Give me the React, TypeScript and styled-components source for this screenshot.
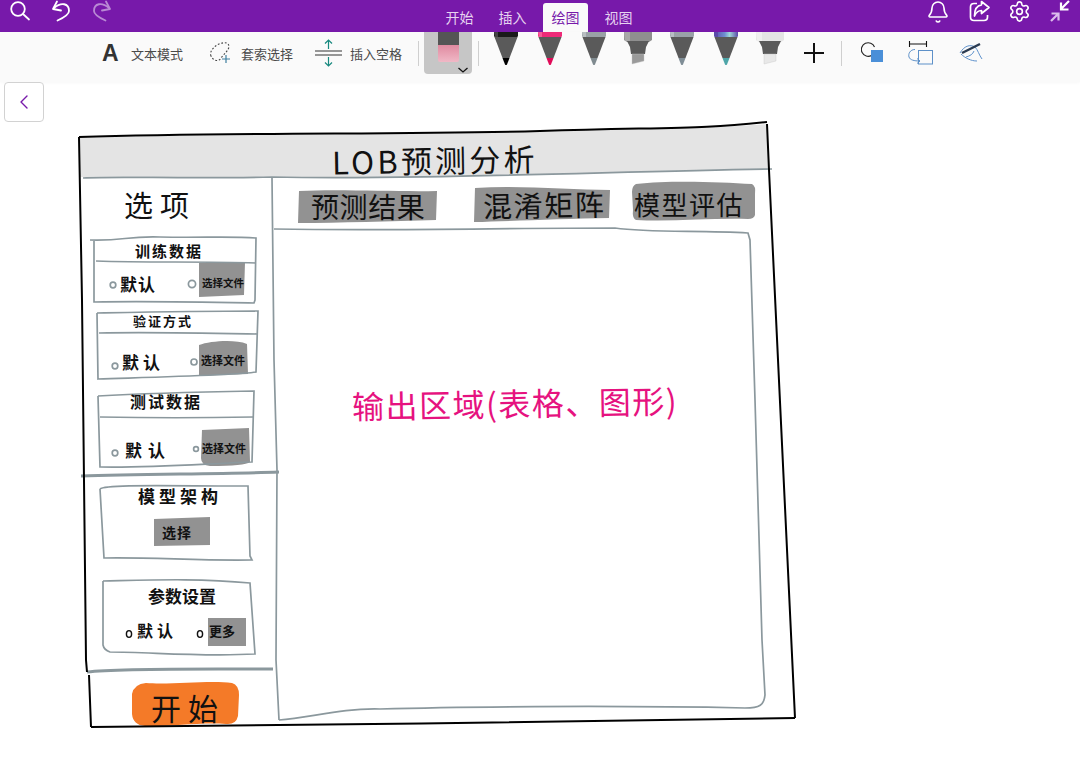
import React from "react";
import styled, { createGlobalStyle } from "styled-components";
import { Bell, ChevronLeft, Settings } from "lucide-react";

const cjk = `"Noto Sans CJK SC", "Noto Sans", sans-serif`;
const CANVAS_TOP = 82;

const GlobalStyle = createGlobalStyle`
  html, body {
    margin: 0;
    padding: 0;
    background: #ffffff;
    overflow: hidden;
  }
  body {
    font-family: ${cjk};
  }
`;

const Page = styled.div`
  width: 1080px;
  height: 774px;
  display: flex;
  flex-direction: column;
`;

const TopBar = styled.header`
  height: 32px;
  flex: none;
  background: #7719aa;
  display: grid;
  grid-template-columns: 1fr auto 1fr;
  padding: 0 8px;
  color: #ffffff;
`;

const IconGroup = styled.div<{ $end?: boolean }>`
  display: flex;
  gap: 17px;
  justify-content: ${(p) => (p.$end ? "flex-end" : "flex-start")};
  svg {
    display: block;
  }
`;

const Tabs = styled.nav`
  display: flex;
  gap: 8px;
  align-items: flex-end;
  margin-left: -2px;
`;

const Tab = styled.div<{ $active?: boolean }>`
  width: 45px;
  height: 29px;
  border-radius: 3px 3px 0 0;
  display: flex;
  align-items: center;
  justify-content: center;
  font-size: 14px;
  padding-bottom: 1px;
  box-sizing: border-box;
  background: ${(p) => (p.$active ? "#fafafa" : "transparent")};
  color: ${(p) => (p.$active ? "#7719aa" : "#e6d2f0")};
`;

const Toolbar = styled.div`
  height: 50px;
  flex: none;
  box-sizing: border-box;
  background: #fafafa;
  box-shadow: 0 1px 3px rgba(0, 0, 0, 0.03);
  display: flex;
  align-items: center;
  padding: 0 0 8px 102px;
`;

const Tool = styled.div<{ $gap: number; $after: number }>`
  display: flex;
  align-items: center;
  gap: ${(p) => p.$gap}px;
  margin-right: ${(p) => p.$after}px;
  font-size: 13px;
  color: #4a4a4a;
  svg {
    display: block;
  }
`;

const BigA = styled.span`
  font-family: "Liberation Sans", sans-serif;
  font-weight: 700;
  font-size: 23px;
  color: #333333;
  width: 17px;
`;

const Separator = styled.div<{ $after: number }>`
  width: 1px;
  height: 25px;
  flex: none;
  background: #cfcfcf;
  margin-right: ${(p) => p.$after}px;
`;

const EraserTile = styled.div`
  align-self: flex-start;
  width: 48px;
  height: 42px;
  flex: none;
  background: #c6c6c6;
  border-radius: 0 0 4px 4px;
  margin-right: 6px;
  svg {
    display: block;
  }
`;

const PenRow = styled.div`
  align-self: flex-start;
  display: flex;
  margin-left: 5px;
  margin-right: 12px;
  svg {
    display: block;
  }
`;

const Canvas = styled.main`
  position: relative;
  flex: 1;
  overflow: hidden;
`;

const SketchLayer = styled.svg`
  position: absolute;
  inset: 0;
  width: 100%;
  height: 100%;
`;

const BackButton = styled.button`
  position: absolute;
  left: 4px;
  top: 0;
  width: 40px;
  height: 40px;
  padding: 0;
  display: flex;
  align-items: center;
  justify-content: center;
  background: #ffffff;
  border: 1px solid #d2d2d2;
  border-radius: 4px;
  color: #7719aa;
`;

const Note = styled.div<{
  $x: number;
  $y: number;
  $size: number;
  $space?: number;
  $tilt?: number;
  $bold?: boolean;
  $color?: string;
}>`
  position: absolute;
  left: ${(p) => p.$x}px;
  top: ${(p) => p.$y - CANVAS_TOP}px;
  transform: translateY(-50%) rotate(${(p) => p.$tilt ?? 0}deg);
  transform-origin: left center;
  white-space: nowrap;
  line-height: 1;
  font-size: ${(p) => p.$size}px;
  letter-spacing: ${(p) => p.$space ?? 0}px;
  font-weight: ${(p) => (p.$bold ? 700 : 400)};
  color: ${(p) => p.$color ?? "#111111"};
`;

type PenTip = { barrel: string; barrelEdge: string; nib: string };

const RoundPen = ({ barrel, barrelEdge, nib }: PenTip) => (
  <svg width="44" height="36" viewBox="0 0 44 36">
    <defs>
      <linearGradient id="iris" x1="0" x2="1" y1="0" y2="0">
        <stop offset="0" stopColor="#5a4aa8" />
        <stop offset="0.45" stopColor="#6f8fd0" />
        <stop offset="0.65" stopColor="#9fd8d8" />
        <stop offset="1" stopColor="#5a4aa8" />
      </linearGradient>
    </defs>
    <path d="M10 0H34V4L32 7H12L10 4Z" fill={barrel} />
    <path d="M10 0H14V5H11Z" fill={barrelEdge} />
    <path d="M10.5 5H33.5L25.5 26H18.5Z" fill="#5a5a5a" />
    <path d="M18.5 26H25.5L23 32.5Q22 33.5 21 32.5Z" fill={nib} />
  </svg>
);

const ChiselPen = ({ barrel, barrelEdge, nib }: PenTip) => (
  <svg width="44" height="36" viewBox="0 0 44 36">
    <path d="M8 0H36V8L33 10H11L8 8Z" fill={barrel} />
    <path d="M8 0H14V9H9Z" fill={barrelEdge} />
    <path d="M11 9H33L30 15L29 22H15L14 15Z" fill="#5a5a5a" />
    <path d="M16 22H28V29L16 32Z" fill={nib} stroke="#c4c4c4" strokeWidth="0.4" />
  </svg>
);

const Eraser = () => (
  <svg width="48" height="42" viewBox="0 0 48 42">
    <defs>
      <linearGradient id="rubber" x1="0" x2="0" y1="0" y2="1">
        <stop offset="0" stopColor="#e08aa0" />
        <stop offset="1" stopColor="#f0b8c6" />
      </linearGradient>
    </defs>
    <rect x="14" y="0" width="21" height="13" fill="#555555" />
    <path d="M14 13H35V28Q35 30 33 30H16Q14 30 14 28Z" fill="url(#rubber)" />
    <path d="M34.5 36L39 40L43.5 36" fill="none" stroke="#111" strokeWidth="1.3" />
  </svg>
);

const SearchIcon = () => (
  <svg width="24" height="24" viewBox="0 0 24 24" fill="none" stroke="#fff" strokeWidth="1.8">
    <circle cx="10" cy="9" r="6.8" />
    <path d="M15 14L21 19.5" strokeLinecap="round" />
  </svg>
);

const UndoIcon = ({ flip }: { flip?: boolean }) => (
  <svg
    width="24"
    height="24"
    viewBox="0 0 24 24"
    fill="none"
    stroke={flip ? "#b98ad4" : "#fff"}
    strokeWidth="1.8"
    strokeLinecap="round"
    strokeLinejoin="round"
  >
    <g transform={flip ? "matrix(-1 0 0 1 24 0)" : undefined}>
      <path d="M8 1.5L4 9L12 10.5" />
      <path d="M5 8C12 2 20 3 20 11C20 15 14 18 8.5 20.5" />
    </g>
  </svg>
);

const ShareIcon = () => (
  <svg width="24" height="24" viewBox="0 0 24 24" fill="none" stroke="#fff" strokeWidth="1.7" strokeLinejoin="round">
    <path d="M10 3.5H7Q3.5 3.5 3.5 7V17Q3.5 20.5 7 20.5H17Q20.5 20.5 20.5 17V15" />
    <path d="M14.5 1.5L22 7.5L14.5 13.5V10.5C11 10.5 9 12.5 7.5 16C7.5 10 10 5.5 14.5 4.8Z" />
  </svg>
);

const CollapseIcon = () => (
  <svg width="24" height="24" viewBox="0 0 24 24" fill="none" strokeWidth="2.2">
    <path d="M21 1L13.5 8.5M13 2.5V9.5H20.5" stroke="#fff" />
    <path d="M3 21L10 14M3.5 13.5H10.5V20.5" stroke="#dcbcec" />
  </svg>
);

const LassoIcon = () => (
  <svg width="24" height="24" viewBox="0 0 24 24" fill="none">
    <path
      d="M2 15C0 11 5 5 10 3C15 1 20 1 20 6C19 10 15 13 12 17C10 21 4 20 2 15Z"
      stroke="#444"
      strokeWidth="1.1"
      strokeDasharray="1.8 1.8"
    />
    <path d="M17 14V22M13 18H21" stroke="#3f7f9f" strokeWidth="1.2" />
  </svg>
);

const InsertSpaceIcon = () => (
  <svg width="27" height="30" viewBox="0 0 27 30" fill="none" strokeWidth="1.2">
    <path d="M0 13H27M0 17H27" stroke="#333" />
    <path d="M13.5 11V2M10 5.5L13.5 2L17 5.5M13.5 19V28M10 24.5L13.5 28L17 24.5" stroke="#17897f" />
  </svg>
);

const ShapeIcon = () => (
  <svg width="24" height="24" viewBox="0 0 24 24">
    <path d="M10.5 14.5A6.8 6.8 0 1 1 13.5 6" fill="none" stroke="#222" strokeWidth="1.1" />
    <rect x="10" y="9" width="12" height="12" fill="#4a8fd8" />
  </svg>
);

const ReplayIcon = () => (
  <svg width="26" height="26" viewBox="0 0 26 26" fill="none">
    <path d="M1 4H19M1.5 1V7M18.5 1V7" stroke="#111" strokeWidth="1.1" />
    <rect x="10.5" y="10.5" width="14" height="13.5" stroke="#5d90c8" strokeWidth="1" />
    <path d="M7 9.5C2 9.5 0 14 1 17C2 20 6 21 12 21M9 18.5L12 21L9 23.5" stroke="#5d90c8" strokeWidth="1" />
  </svg>
);

const InkIcon = () => (
  <svg width="24" height="24" viewBox="0 0 24 24" fill="none">
    <path d="M1 12C5 5 11 3 16 6C19 9 20 14 23 18" stroke="#5f92cc" strokeWidth="1" />
    <path d="M2 13C6 17 12 20 18 20M7 16C11 15 14 13 15 10" stroke="#5f92cc" strokeWidth="1" />
    <path d="M3 12L21 3" stroke="#2a3b52" strokeWidth="2.4" />
  </svg>
);

const pens = [
  { kind: "round", barrel: "#1a1a1a", barrelEdge: "#444444", nib: "#000000" },
  { kind: "round", barrel: "#ee2a78", barrelEdge: "#f65a98", nib: "#e00a58" },
  { kind: "round", barrel: "#9aa2a6", barrelEdge: "#b8bec1", nib: "#7f8a8f" },
  { kind: "chisel", barrel: "#8f8f8f", barrelEdge: "#a8a8a8", nib: "#9a9a9a" },
  { kind: "round", barrel: "#9aa2a8", barrelEdge: "#b8bec4", nib: "#7f8d96" },
  { kind: "round", barrel: "url(#iris)", barrelEdge: "#5a4aa8", nib: "#4ea5a8" },
  { kind: "chisel", barrel: "#e4e4e4", barrelEdge: "#efefef", nib: "#e8e8e8" },
];

// hand-drawn wireframe, page coordinates
const greyBlocks = [
  "M299 191C340 189 400 192 437 191L436 220C390 221 340 223 298 223Z",
  "M475 188C520 185 570 190 610 190L609 218C560 219 510 221 474 222Z",
  "M636 184C670 180 720 182 752 184Q756 186 755 194L755 215Q754 219 748 219C710 218 670 222 636 220Q632 218 633 210L632 192Q632 186 636 184Z",
  "M199 263L245 262L244 295L199 297Z",
  "M199 345C210 341 235 339 247 344L248 374L199 376Z",
  "M202 430L249 428L250 462Q245 466 210 466Q201 465 201 458Z",
  "M154 519L210 517L210 545L154 546Z",
  "M208 618L246 618L246 646L208 646Z",
];

const boxLines = [
  "M90 240C125 241 125 236 160 237C200 238 230 236 256 238L255 300L254 303C200 302 150 301 94 302L94 240",
  "M96 261C150 263 200 261 256 263",
  "M97 313C150 312 200 311 258 311L256 372C240 375 160 377 98 379L97 313",
  "M99 333C150 332 200 333 257 334",
  "M98 396C150 393 200 392 254 391L252 462C200 464 150 468 100 467L98 396",
  "M100 417C150 418 200 418 253 417",
  "M100 489C105 484 170 486 248 486L250 556L252 560C200 561 150 557 104 558L100 489",
  "M103 581C150 580 200 578 250 583L255 654C200 657 150 652 110 652Q104 650 103 645L103 581",
];

const radios: [number, number, number][] = [
  [113, 285, 2.8],
  [192, 284, 3.6],
  [115, 366, 2.8],
  [194, 362, 3],
  [115, 453, 2.8],
  [196, 449, 2.4],
];

const darkRadios: [number, number][] = [
  [129, 634],
  [200, 634],
];

const Wireframe = () => (
  <SketchLayer viewBox={`0 ${CANVAS_TOP} 1080 692`} fill="none">
    <path
      d="M80 138C250 133 400 136 540 131S700 129 767 124L768 169C600 172 400 180 272 177C200 178 120 176 80 177Z"
      fill="#e4e4e4"
    />
    {greyBlocks.map((d) => (
      <path key={d} d={d} fill="#929292" />
    ))}
    <path
      d="M132 694Q134 684 146 683C170 685 210 680 232 683Q239 685 239 695L238 716Q236 725 226 724C200 722 170 727 145 726Q133 725 132 714Z"
      fill="#f47a28"
    />
    <g stroke="#8b989d" strokeWidth="1.7">
      <path d="M83 178C120 176 180 179 272 177C400 180 600 172 772 169" />
      <path d="M272 178L274 360L277 470L276 660L279 720" />
      <path d="M274 229C400 231 500 228 615 228C650 233 700 230 748 233L750 240L755 400L762 640L765 695C764 705 760 708 745 708C600 705 450 707 380 709C340 708 310 718 279 720" />
      {boxLines.map((d) => (
        <path key={d} d={d} />
      ))}
      <path d="M81 476C140 474 220 474 279 472" strokeWidth="3" />
      <path d="M87 672C120 668 200 669 273 669" strokeWidth="3" />
      {radios.map(([cx, cy, r]) => (
        <circle key={`${cx}-${cy}`} cx={cx} cy={cy} r={r} />
      ))}
    </g>
    <g stroke="#111" strokeWidth="1.4">
      {darkRadios.map(([cx, cy]) => (
        <ellipse key={cx} cx={cx} cy={cy} rx="2.6" ry="3.4" />
      ))}
    </g>
    <g stroke="#000" strokeWidth="2">
      <path d="M79 137C250 132 400 135 540 131S700 129 767 122" />
      <path d="M767 124L769 170L795 718" />
      <path d="M795 718C600 722 300 725 91 727" />
      <path d="M79 137L82 300L86 660L87 672M89 675L91 727" />
    </g>
  </SketchLayer>
);

const notes = [
  { text: "LOB预测分析", x: 332, y: 161, size: 31, space: 3.2, tilt: -1 },
  { text: "选项", x: 124, y: 204, size: 29, space: 7 },
  { text: "预测结果", x: 311, y: 206, size: 28, space: 0.6 },
  { text: "混淆矩阵", x: 483, y: 205, size: 29, space: 1.6, tilt: -1 },
  { text: "模型评估", x: 634, y: 204, size: 26, space: 1.5 },
  { text: "训练数据", x: 135, y: 250, size: 15, space: 2, bold: true },
  { text: "默认", x: 120, y: 283, size: 17, space: 1, bold: true },
  { text: "选择文件", x: 202, y: 283, size: 10.5, bold: true },
  { text: "验证方式", x: 133, y: 320, size: 13, space: 2, bold: true },
  { text: "默认", x: 122, y: 361, size: 17, space: 4, bold: true },
  { text: "选择文件", x: 201, y: 360, size: 11, bold: true },
  { text: "测试数据", x: 130, y: 401, size: 16, space: 2, bold: true },
  { text: "默认", x: 125, y: 449, size: 17, space: 6, bold: true },
  { text: "选择文件", x: 202, y: 448, size: 11, bold: true },
  { text: "模型架构", x: 138, y: 495, size: 17, space: 4, bold: true },
  { text: "选择", x: 162, y: 532, size: 14, space: 1, bold: true },
  { text: "参数设置", x: 148, y: 595, size: 17, bold: true },
  { text: "默认", x: 137, y: 630, size: 16, space: 4, bold: true },
  { text: "更多", x: 209, y: 630, size: 13, bold: true },
  { text: "开始", x: 151, y: 707, size: 30, space: 7 },
];

export default function App() {
  return (
    <Page>
      <GlobalStyle />
      <TopBar>
        <IconGroup>
          <SearchIcon />
          <UndoIcon />
          <UndoIcon flip />
        </IconGroup>
        <Tabs>
          <Tab>开始</Tab>
          <Tab>插入</Tab>
          <Tab $active>绘图</Tab>
          <Tab>视图</Tab>
        </Tabs>
        <IconGroup $end>
          <Bell size={24} strokeWidth={1.6} />
          <ShareIcon />
          <Settings size={23} strokeWidth={1.7} />
          <CollapseIcon />
        </IconGroup>
      </TopBar>

      <Toolbar>
        <Tool $gap={12} $after={26}>
          <BigA>A</BigA>
          <span>文本模式</span>
        </Tool>
        <Tool $gap={8} $after={22}>
          <LassoIcon />
          <span>套索选择</span>
        </Tool>
        <Tool $gap={8} $after={16}>
          <InsertSpaceIcon />
          <span>插入空格</span>
        </Tool>
        <Separator $after={5} />
        <EraserTile>
          <Eraser />
        </EraserTile>
        <Separator $after={0} />
        <PenRow>
          {pens.map((pen) =>
            pen.kind === "round" ? <RoundPen key={pen.barrel} {...pen} /> : <ChiselPen key={pen.barrel} {...pen} />
          )}
        </PenRow>
        <Tool $gap={0} $after={17}>
          <svg width="20" height="20" viewBox="0 0 20 20" stroke="#111" strokeWidth="2">
            <path d="M0 10H20M10 0V20" />
          </svg>
        </Tool>
        <Separator $after={19} />
        <Tool $gap={0} $after={23}>
          <ShapeIcon />
        </Tool>
        <Tool $gap={0} $after={25}>
          <ReplayIcon />
        </Tool>
        <Tool $gap={0} $after={0}>
          <InkIcon />
        </Tool>
      </Toolbar>

      <Canvas>
        <Wireframe />
        <BackButton aria-label="back">
          <ChevronLeft size={24} strokeWidth={1.4} />
        </BackButton>
        {notes.map((n) => (
          <Note
            key={`${n.text}-${n.x}`}
            $x={n.x}
            $y={n.y}
            $size={n.size}
            $space={n.space}
            $tilt={n.tilt}
            $bold={n.bold}
          >
            {n.text}
          </Note>
        ))}
        <Note $x={352} $y={405} $size={32} $space={1.5} $tilt={-1} $color="#e6127f">
          输出区域(表格、图形)
        </Note>
      </Canvas>
    </Page>
  );
}
